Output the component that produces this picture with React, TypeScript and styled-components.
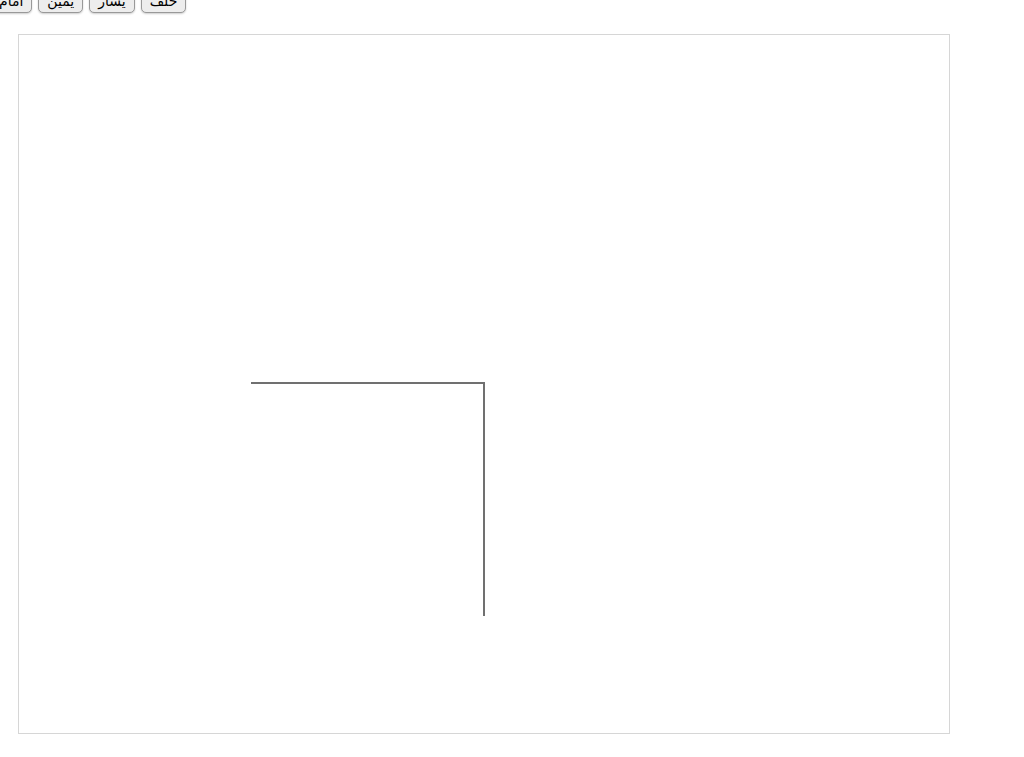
import { JSX } from 'react';
import styled, { createGlobalStyle } from 'styled-components';

const GlobalStyle = createGlobalStyle`
  html, body {
    margin: 0;
    padding: 0;
    background: #ffffff;
    font-family: "DejaVu Sans", "Liberation Sans", sans-serif;
    overflow: hidden;
  }
`;

const Page = styled.div`
  width: 1024px;
  height: 757px;
  display: flex;
  flex-direction: column;
  align-items: flex-start;
`;

const Toolbar = styled.div`
  display: flex;
  flex-direction: row-reverse;
  gap: 6px;
  margin: -9px 0 0 -10px;
`;

const ControlButton = styled.button`
  font-family: "DejaVu Sans", sans-serif;
  font-size: 14px;
  line-height: 17px;
  color: #000;
  padding: 1px 8px 2px;
  background: #ededed;
  border: 1px solid #999;
  border-radius: 5px;
  box-shadow: 0 1px 2px rgba(0, 0, 0, 0.2);
  cursor: pointer;
`;

const Stage = styled.div`
  margin: 21px 0 0 18px;
  width: 930px;
  height: 698px;
  border: 1px solid #d6d6d6;
  background: #fff;
`;

const Drawing = styled.svg`
  display: block;
`;

const buttons = ['خلف', 'يسار', 'يمين', 'أمام'];

export default function App(): JSX.Element {
  return (
    <Page>
      <GlobalStyle />
      <Toolbar>
        {buttons.map((label) => (
          <ControlButton key={label}>{label}</ControlButton>
        ))}
      </Toolbar>
      <Stage>
        <Drawing width="930" height="698" viewBox="0 0 930 698">
          <polyline points="232,348 465,348 465,581" fill="none" stroke="#707070" strokeWidth="2" />
        </Drawing>
      </Stage>
    </Page>
  );
}
